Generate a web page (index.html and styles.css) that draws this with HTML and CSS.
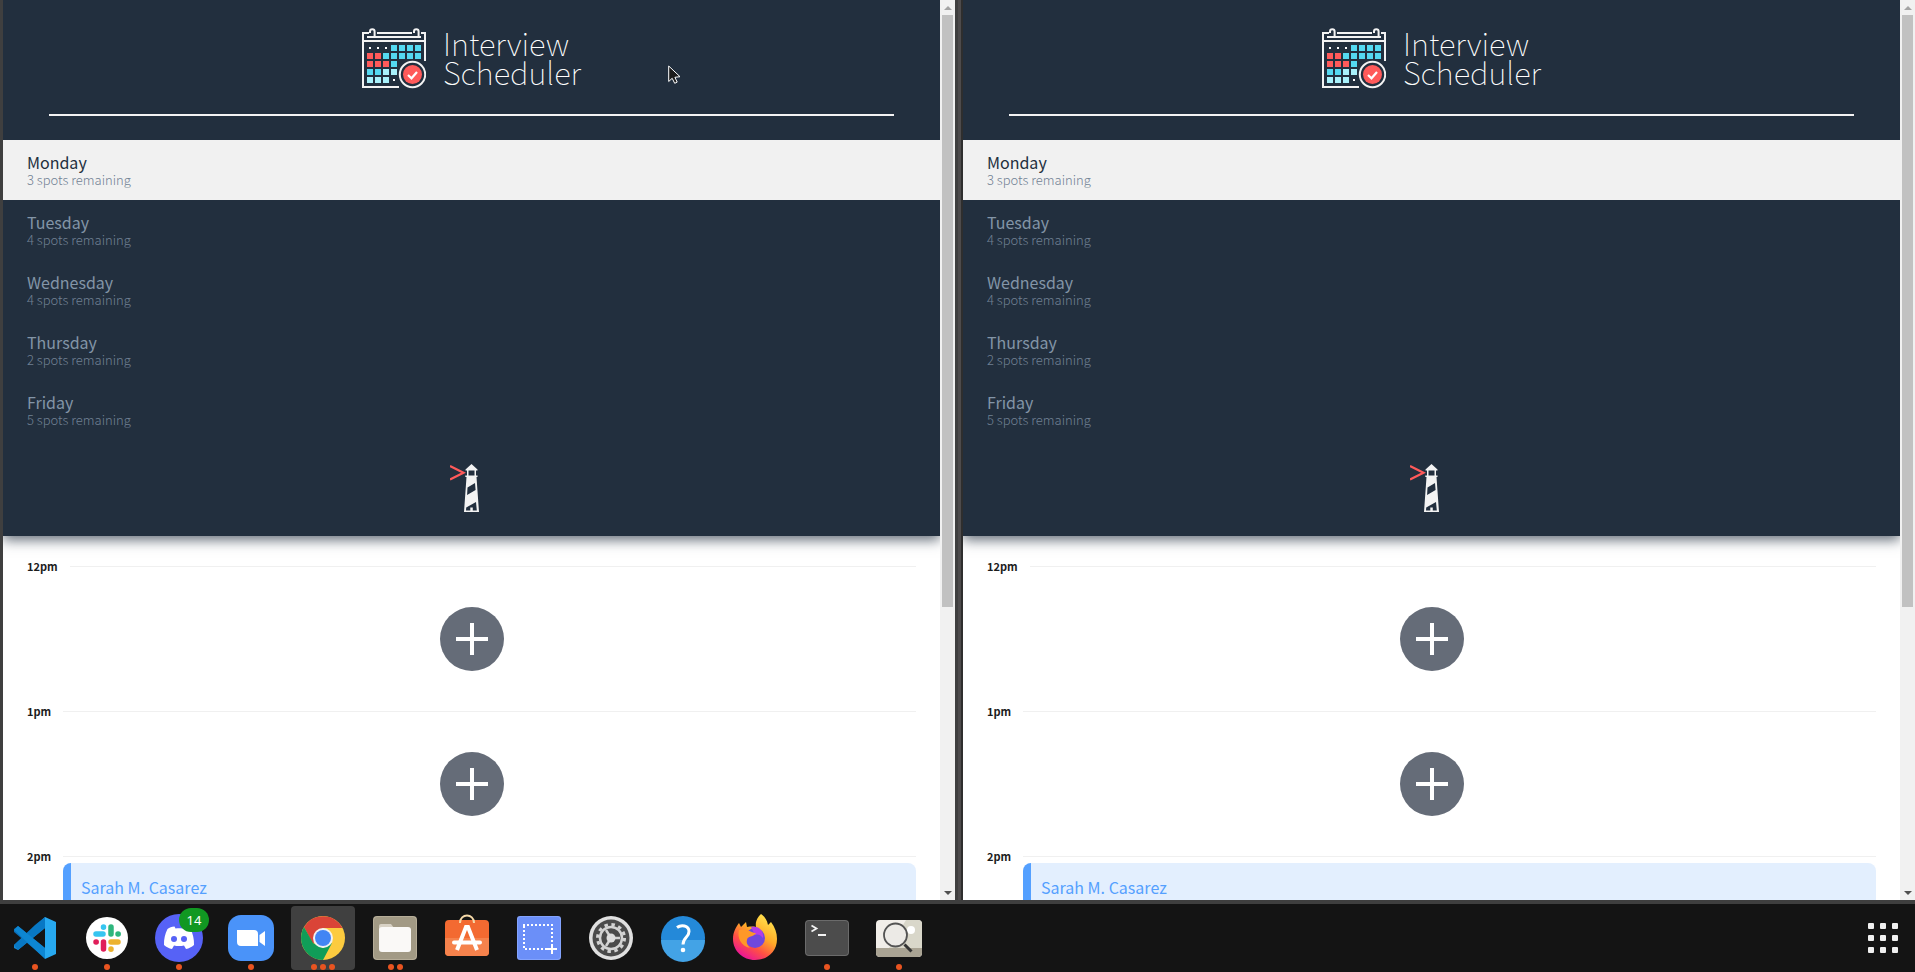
FILE: index.html
```html
<!DOCTYPE html>
<html lang="en">
<head>
<meta charset="utf-8">
<title>Interview Scheduler</title>
<link rel="stylesheet" href="styles.css">
</head>
<body>
<svg class="defs" aria-hidden="true">
  <symbol id="calendar" viewBox="0 0 64 61">
    <g fill="none" stroke="#f3f3f3" stroke-width="2">
      <path d="M7 5H1v54h36M15 5h35M59 5h4v28M5 9h8M13 9h43M56 9h3M1 13h62"/>
      <path d="M8 5V3.500a2.300 2.300 0 0 1 4.600 0V9M52 5V3.500a2.300 2.300 0 0 1 4.600 0V9"/>
      <circle cx="50.500" cy="46.500" r="12.700"/>
    </g>
    <path fill="#fff" d="M7 19h2v2h-2zM15 19h2v2h-2zM23 19h2v2h-2zM31 51h2v2h-2z"/>
    <path fill="#54d9f1" d="M29 17h6v6h-6zM37 17h6v6h-6zM45 17h6v6h-6zM53 17h6v6h-6zM21 25h6v6h-6zM29 25h6v6h-6zM37 25h6v6h-6zM45 25h6v6h-6zM53 25h6v6h-6zM29 33h6v6h-6zM5 41h6v6h-6zM13 41h6v6h-6z"/>
    <path fill="#ff5a5a" d="M5 25h6v6h-6zM13 25h6v6h-6zM5 33h6v6h-6zM13 33h6v6h-6zM21 33h6v6h-6z"/>
    <path fill="#a8f1fb" d="M21 41h6v6h-6zM29 41h6v6h-6zM5 49h6v6h-6zM13 49h6v6h-6zM21 49h6v6h-6z"/>
    <circle cx="50.500" cy="46.500" r="9.500" fill="#ff5a5a"/>
    <path d="M46 47l3.500 3.300 5.500-6.300" fill="none" stroke="#fff" stroke-width="2.200"/>
  </symbol>
  <symbol id="lighthouse" viewBox="0 0 43 48">
    <path d="M0 2l13.500 6.800L0 15.500" fill="none" stroke="#ff5a5a" stroke-width="2.200"/>
    <path fill="#f3f3f3" d="M21.500 0l6 5.500v1H26v5h1.500v1.500H26.500L29 48H14l2.500-35h-1.200v-1.500H17v-5h-1.500v-1z"/>
    <path fill="#222f3e" d="M18.500 6.500h6v5h-6zM17.500 23.500l7.500-4.500.6 7-8.500 5zM16.200 43.500l9.800-5.500.8 8.500h-4v-3h-2.500v3h-4.300z"/>
  </symbol>
  <symbol id="plus" viewBox="0 0 64 64">
    <circle cx="32" cy="32" r="32" fill="#656c78"/>
    <path d="M16 32h32M32 16v32" stroke="#fff" stroke-width="4"/>
  </symbol>
</svg>

<main class="desktop">
  <section class="window">
    <div class="page">
      <aside class="sidebar">
        <div class="brand">
          <svg class="brand-icon"><use href="#calendar"/></svg>
          <h1 class="brand-name">Interview<br>Scheduler</h1>
        </div>
        <hr class="rule">
        <nav><ul class="days">
          <li><button class="day day-selected"><span class="day-name">Monday</span><span class="day-spots">3 spots remaining</span></button></li>
          <li><button class="day"><span class="day-name">Tuesday</span><span class="day-spots">4 spots remaining</span></button></li>
          <li><button class="day"><span class="day-name">Wednesday</span><span class="day-spots">4 spots remaining</span></button></li>
          <li><button class="day"><span class="day-name">Thursday</span><span class="day-spots">2 spots remaining</span></button></li>
          <li><button class="day"><span class="day-name">Friday</span><span class="day-spots">5 spots remaining</span></button></li>
        </ul></nav>
        <svg class="lighthouse"><use href="#lighthouse"/></svg>
      </aside>
      <div class="schedule">
        <article class="slot"><header class="time"><h2 class="hour">12pm</h2><hr class="line"></header><div class="empty"><button class="add" aria-label="Add 12pm appointment"><svg><use href="#plus"/></svg></button></div></article>
        <article class="slot"><header class="time"><h2 class="hour">1pm</h2><hr class="line"></header><div class="empty"><button class="add" aria-label="Add 1pm appointment"><svg><use href="#plus"/></svg></button></div></article>
        <article class="slot"><header class="time"><h2 class="hour">2pm</h2><hr class="line"></header><div class="booking"><h3 class="student">Sarah M. Casarez</h3></div></article>
      </div>
    </div>
    <div class="scrollbar"><span class="arrow arrow-up"></span><div class="track"><div class="thumb"></div></div><span class="arrow arrow-down"></span></div>
  </section>
  <div class="divider"></div>
  <section class="window">
    <div class="page">
      <aside class="sidebar">
        <div class="brand">
          <svg class="brand-icon"><use href="#calendar"/></svg>
          <h1 class="brand-name">Interview<br>Scheduler</h1>
        </div>
        <hr class="rule">
        <nav><ul class="days">
          <li><button class="day day-selected"><span class="day-name">Monday</span><span class="day-spots">3 spots remaining</span></button></li>
          <li><button class="day"><span class="day-name">Tuesday</span><span class="day-spots">4 spots remaining</span></button></li>
          <li><button class="day"><span class="day-name">Wednesday</span><span class="day-spots">4 spots remaining</span></button></li>
          <li><button class="day"><span class="day-name">Thursday</span><span class="day-spots">2 spots remaining</span></button></li>
          <li><button class="day"><span class="day-name">Friday</span><span class="day-spots">5 spots remaining</span></button></li>
        </ul></nav>
        <svg class="lighthouse"><use href="#lighthouse"/></svg>
      </aside>
      <div class="schedule">
        <article class="slot"><header class="time"><h2 class="hour">12pm</h2><hr class="line"></header><div class="empty"><button class="add" aria-label="Add 12pm appointment"><svg><use href="#plus"/></svg></button></div></article>
        <article class="slot"><header class="time"><h2 class="hour">1pm</h2><hr class="line"></header><div class="empty"><button class="add" aria-label="Add 1pm appointment"><svg><use href="#plus"/></svg></button></div></article>
        <article class="slot"><header class="time"><h2 class="hour">2pm</h2><hr class="line"></header><div class="booking"><h3 class="student">Sarah M. Casarez</h3></div></article>
      </div>
    </div>
    <div class="scrollbar"><span class="arrow arrow-up"></span><div class="track"><div class="thumb"></div></div><span class="arrow arrow-down"></span></div>
  </section>
</main>

<footer class="dock">
  <div class="apps">
    <button class="app" aria-label="Visual Studio Code">
      <svg viewBox="0 0 48 48"><path fill="#0a6cb4" d="M3 15l4-3 27 22v10L3 18z"/><path fill="#1588d4" d="M34 3v11L7 36l-4-2v-3z"/><path fill="#0878c4" d="M3 31l21-20L34 3v11L7 36z"/><path fill="#0d86d2" d="M3 16l4-4 27 22v11z"/><path fill="#27a9f0" d="M34 3l11 5v32l-11 5z"/></svg>
      <span class="dots"><i></i></span></button>
    <button class="app" aria-label="Slack">
      <svg viewBox="0 0 48 48"><circle cx="24" cy="24" r="21" fill="#fff"/><g stroke-width="5.500" stroke-linecap="round"><path stroke="#36c5f0" d="M13 20h7M20.500 13v.2"/><path stroke="#2eb67d" d="M28 13v7M35 20h.2"/><path stroke="#ecb22e" d="M28 28h7M28 35v.2"/><path stroke="#e01e5a" d="M20.500 28v7M13 28h.2"/></g></svg>
      <span class="dots"><i></i></span></button>
    <button class="app" aria-label="Discord">
      <svg viewBox="0 0 48 48"><circle cx="24" cy="24" r="24" fill="#5662f6"/><path fill="#fff" d="M19.500 12.500c-3 .3-5 1.200-7 2.500-2.500 5-3.700 10-3.500 16 2.500 2.300 5 3.300 8 4l2-3.500c3.300.8 6.700.8 10 0l2 3.500c3-.7 5.500-1.700 8-4 .2-6-1-11-3.500-16-2-1.300-4-2.200-7-2.500l-1 2c-2.300-.5-4.700-.5-7 0z"/><circle cx="19" cy="25" r="3" fill="#5662f6"/><circle cx="29" cy="25" r="3" fill="#5662f6"/></svg>
      <span class="badge">14</span><span class="dots"><i></i></span></button>
    <button class="app" aria-label="Zoom">
      <svg viewBox="0 0 48 48"><rect x="1" y="1" width="46" height="46" rx="13" fill="#4a93f9"/><path fill="#fff" d="M10 16h17q4 0 4 4v12H14q-4 0-4-4zM32.500 21l5.500-4v15l-5.500-4z"/></svg>
      <span class="dots"><i></i></span></button>
    <button class="app app-active" aria-label="Chrome">
      <svg viewBox="0 0 48 48"><circle cx="24" cy="24" r="22" fill="#fccb3f"/><path fill="#da4437" d="M5 13A22 22 0 0 1 43.500 14H24L14 30z"/><path fill="#109d58" d="M5 13A22 22 0 0 0 24 46l9-17-9 5-10-5z"/><circle cx="24" cy="24" r="10" fill="#f1f1f1"/><circle cx="24" cy="24" r="8" fill="#4285f4"/></svg>
      <span class="dots"><i></i><i></i><i></i></span></button>
    <button class="app" aria-label="Files">
      <svg viewBox="0 0 48 48"><rect x="2" y="2" width="44" height="44" rx="4" fill="#b6ad98"/><rect x="3" y="3" width="42" height="42" rx="4" fill="#a29a85"/><path fill="#d8d2c5" d="M8 18v-6q0-2 2-2h10l3 4v4z"/><rect x="8" y="13" width="32" height="25" rx="3" fill="#faf9f7"/></svg>
      <span class="dots"><i></i><i></i></span></button>
    <button class="app" aria-label="Software">
      <svg viewBox="0 0 48 48"><rect x="2" y="6" width="44" height="36" rx="4" fill="#f36a31"/><path fill="#f5824c" d="M2 24h44v14q0 4-4 4H6q-4 0-4-4z"/><path d="M17 9c0-10 14-10 14 0" fill="none" stroke="#f5d9a8" stroke-width="2"/><path d="M14 36l9-23h2l9 23" fill="none" stroke="#fff" stroke-width="4"/><path d="M11 28.500h26" stroke="#fff" stroke-width="4" stroke-linecap="round"/></svg></button>
    <button class="app" aria-label="Screenshot">
      <svg viewBox="0 0 48 48"><rect x="2" y="2" width="44" height="44" rx="3" fill="#83a3fd"/><rect x="3" y="3" width="42" height="42" rx="3" fill="#6b8ff8"/><path d="M8 11h29M37 10v20M9 12v23M10 35h22" stroke="#fff" stroke-width="2" stroke-dasharray="2 2"/><path d="M37 30v10M32 35h10" stroke="#fff" stroke-width="2"/></svg></button>
    <button class="app" aria-label="Settings">
      <svg viewBox="0 0 48 48"><circle cx="24" cy="24" r="22" fill="#e0e0e0"/><circle cx="24" cy="24" r="18.500" fill="#4b4b4b"/><g fill="none" stroke="#d3d3d3"><circle cx="24" cy="24" r="13.500" stroke-width="3" stroke-dasharray="3.500 3.570"/><circle cx="24" cy="24" r="11" stroke-width="2.500"/><path d="M24 24h9M24 24l-5-8M24 24l-5 8" stroke-width="2.500"/></g><circle cx="24" cy="24" r="4.500" fill="#dedede"/></svg></button>
    <button class="app" aria-label="Help">
      <svg viewBox="0 0 48 48"><circle cx="24" cy="24" r="22" fill="#2489d9"/><path fill="#43a3e6" d="M2 26h44a22 22 0 0 1-44 0z"/><path d="M18 13.500c4-3 12-2.500 12 4 0 6-6 5.500-6 13" fill="none" stroke="#fff" stroke-width="3"/><circle cx="24" cy="36" r="2.300" fill="#fff"/></svg></button>
    <button class="app" aria-label="Firefox">
      <svg viewBox="0 0 48 48"><defs><linearGradient id="fire" x1=".85" y1=".1" x2=".3" y2="1"><stop offset="0" stop-color="#ffe14d"/><stop offset=".4" stop-color="#ffab27"/><stop offset=".7" stop-color="#ff4f45"/><stop offset="1" stop-color="#e8129c"/></linearGradient></defs><path fill="url(#fire)" d="M30 0c4 3 6 6 7 11l3-3c4 5 6 11 6 17C46 38 36 46 24 46S2 37 2 25c0-7 3-12 6-16l2 4 5-5 1 5c6-1 9 0 9 0-1-6 2-10 5-13z"/><circle cx="24" cy="24" r="10" fill="#7048dd"/><path fill="#b43ce8" d="M20 13c9-2 13 5 12 11-3-4-6-4-8-3z"/><path fill="#ff9828" d="M8 16c8-3 12 3 17 3-2 4-9 3-9 7-1 3 1 6 3 8-9-2-13-10-11-18z"/></svg></button>
    <button class="app" aria-label="Terminal">
      <svg viewBox="0 0 48 48"><rect x="2" y="6" width="44" height="36" rx="4" fill="#6b6b6b"/><rect x="3" y="7" width="42" height="34" rx="3" fill="#4c4c4c"/><path d="M8.500 11.500l5 3-5 3M15 21h8" fill="none" stroke="#f3f3f3" stroke-width="1.800"/></svg>
      <span class="dots"><i></i></span></button>
    <button class="app" aria-label="Image Viewer">
      <svg viewBox="0 0 48 48"><rect x="1" y="6" width="46" height="37" rx="4" fill="#f1eee9"/><path fill="#d9d7ca" d="M31 6h12q4 0 4 4v24H14z"/><path fill="#a9a393" d="M1 34h46v5q0 4-4 4H5q-4 0-4-4z"/><circle cx="36" cy="16" r="4" fill="#fff"/><circle cx="20.500" cy="21" r="11.500" fill="#eceae6" stroke="#535353" stroke-width="1.800"/><path d="M29.500 30.500l7 7" stroke="#333" stroke-width="3"/></svg>
      <span class="dots"><i></i></span></button>
  </div>
  <button class="launcher" aria-label="Show applications"><i></i><i></i><i></i><i></i><i></i><i></i><i></i><i></i><i></i></button>
</footer>

<svg class="pointer" viewBox="0 0 13 19" aria-hidden="true"><path d="M.7 1v15.500l3.500-3.200 2.500 5 2.500-1.200-2.300-4.800 5.100-.6z" fill="#1c1c1c" stroke="#fff"/></svg>
</body>
</html>
```
FILE: styles.css
```css
* { box-sizing: border-box; }

body {
  margin: 0;
  height: 100vh;
  display: flex;
  flex-direction: column;
  overflow: hidden;
  background: #141414;
  font-family: "Noto Sans CJK SC", "Noto Sans", sans-serif;
  color: #222f3e;
}

button {
  border: 0;
  padding: 0;
  background: none;
  font: inherit;
  color: inherit;
  cursor: pointer;
}

h1, h2, h3, ul, hr { margin: 0; padding: 0; border: 0; }

.defs { position: absolute; width: 0; height: 0; }

/* Windows */
.desktop {
  flex: 1;
  min-height: 0;
  display: flex;
  padding-left: 3px;
  background: #3f3f3f;
  border-bottom: 4px solid #3f3f3f;
}

.window {
  flex: 1;
  min-width: 0;
  display: flex;
  overflow: hidden;
  background: #fff;
}

.divider {
  width: 8px;
  background: linear-gradient(to right, #3f3f3f 0 3px, #4d4b4c 3px 6px, #2e2e2e 6px);
}

.page { flex: 1; min-width: 0; }

.scrollbar {
  width: 15px;
  display: flex;
  flex-direction: column;
  align-items: center;
  background: #f1f1f1;
}

.track { flex: 1; width: 11px; }
.thumb { height: 68%; background: #c1c1c1; }

.arrow {
  height: 15px;
  display: flex;
  align-items: center;
}

.arrow::before {
  content: "";
  border: 4px solid transparent;
}

.arrow-up::before { border-top: 0; border-bottom-color: #a3a3a3; }
.arrow-down::before { border-bottom: 0; border-top-color: #505050; }

/* Sidebar */
.sidebar {
  display: flex;
  flex-direction: column;
  padding-bottom: 24px;
  background: #222f3e;
  box-shadow: 0 4px 12px rgba(34, 47, 62, 0.7);
}

.brand {
  display: flex;
  justify-content: center;
  gap: 17px;
  padding: 28px 0 25px;
}

.brand-icon { width: 64px; height: 61px; }

.brand-name {
  font-size: 31px;
  font-weight: 100;
  line-height: 29px;
  color: #fff;
}

.rule {
  height: 2px;
  margin: 0 46px 24px;
  background: #f3f3f3;
}

.days { list-style: none; }

.day {
  width: 100%;
  height: 60px;
  padding: 12px 24px;
  display: flex;
  flex-direction: column;
  text-align: left;
  color: #8395a7;
}

.day-name { font-size: 16px; line-height: 20px; }
.day-spots { font-size: 13px; line-height: 16px; font-weight: 300; color: #718194; }
.day-selected { background: #f1f1f1; color: #222f3e; }

.lighthouse {
  width: 43px;
  height: 48px;
  margin: 24px auto 0;
}

/* Schedule */
.schedule { padding: 23px 24px 0; }
.slot { height: 145px; }

.time {
  display: flex;
  align-items: center;
  gap: 12px;
}

.hour {
  font-size: 11px;
  line-height: 14px;
  font-weight: 700;
  color: #1c1c1c;
}

.line {
  flex: 1;
  height: 1px;
  background: #f0f0f0;
}

.empty {
  display: flex;
  justify-content: center;
  padding-top: 34px;
}

.add, .add svg { display: block; width: 64px; height: 64px; }

.booking {
  height: 112px;
  margin-left: 36px;
  padding: 12px 10px;
  background: #e3effe;
  border-left: 8px solid #54a0ff;
  border-radius: 8px;
}

.student {
  font-size: 16px;
  line-height: 24px;
  font-weight: 400;
  color: #54a0ff;
}

/* Dock */
.dock {
  height: 68px;
  display: flex;
  align-items: center;
  justify-content: space-between;
  padding: 0 17px 0 3px;
  background: #141414;
}

.apps { display: flex; gap: 8px; }

.app {
  position: relative;
  width: 64px;
  height: 64px;
  display: flex;
  align-items: center;
  justify-content: center;
  border-radius: 4px;
}

.app svg { width: 48px; height: 48px; }
.app-active { background: #404040; }

.dots {
  position: absolute;
  bottom: 0;
  display: flex;
  gap: 3px;
}

.dots i {
  width: 6px;
  height: 6px;
  border-radius: 50%;
  background: #e95420;
}

.badge {
  position: absolute;
  top: 2px;
  right: 2px;
  width: 30px;
  height: 24px;
  border-radius: 12px;
  background: #119822;
  color: #fff;
  font: 13px/24px "Noto Sans", sans-serif;
  text-align: center;
}

.launcher {
  display: grid;
  grid-template-columns: repeat(3, 6px);
  gap: 6px;
}

.launcher i {
  height: 6px;
  border-radius: 1px;
  background: #f0f0f0;
}

.pointer {
  position: absolute;
  left: 668px;
  top: 65px;
  width: 13px;
  height: 19px;
}
```
